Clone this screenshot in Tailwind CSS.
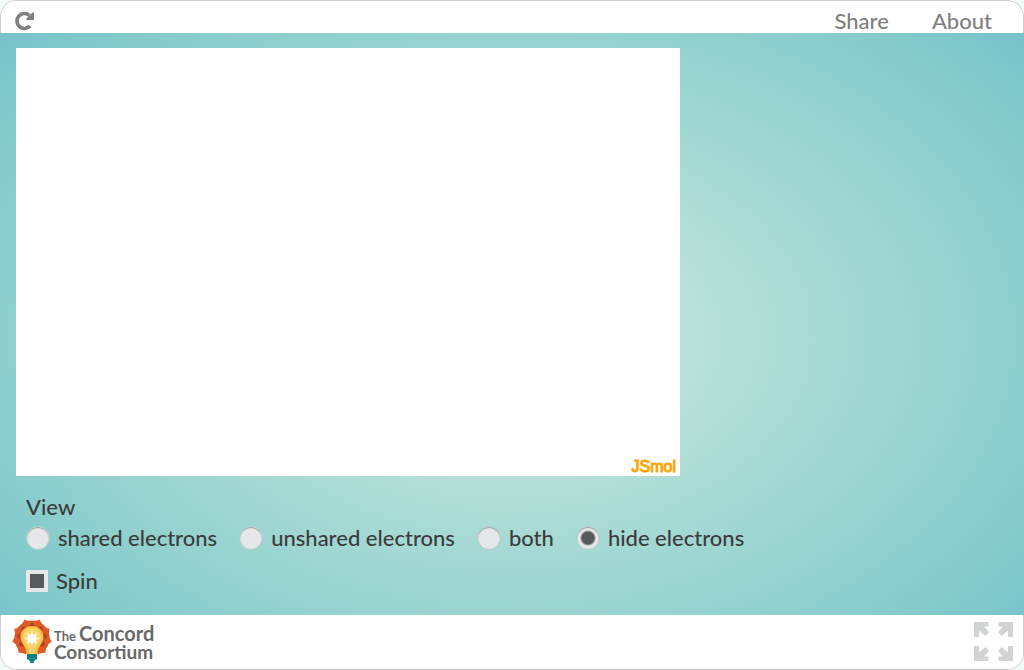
<!DOCTYPE html>
<html lang="en">
<head>
<meta charset="utf-8">
<meta name="viewport" content="width=device-width, initial-scale=1">
<title>Electron viewer</title>
<script src="https://cdn.jsdelivr.net/npm/@tailwindcss/browser@4"></script>
</head>
<body class="bg-[#f3faf9] font-['Lato',sans-serif] text-[22px] leading-7 font-medium text-[#3c3c3c]">
<div class="flex min-h-screen flex-col overflow-hidden rounded-2xl bg-white">
  <header class="flex h-[33px] items-end justify-between rounded-t-2xl border border-b-0 border-[#d0d0d0] pr-[31px] pl-3 text-[#7f7f7f]">
    <button type="button" aria-label="Reload" class="flex h-6 w-6 items-center justify-center">
      <svg viewBox="0 0 24 24" class="h-6 w-6" fill="none" aria-hidden="true">
        <path d="M17 17A7.500 7.500 0 1 1 16.500 6.500" stroke="#7f7f7f" stroke-width="3.600"/>
        <path d="M21 3.500V11h-7.500v-1.500l6-6z" fill="#7f7f7f"/>
      </svg>
    </button>
    <nav class="flex h-[26px] gap-[43px]">
      <a href="#share">Share</a>
      <a href="#about">About</a>
    </nav>
  </header>

  <main class="flex-1 bg-[radial-gradient(ellipse_70%_82%_at_50%_52%,#c3e7da_0%,#bae2d9_24%,#a6d9d4_45%,#8dcfce_72%,#75c2c9_97%)] px-4 pt-[15px] pb-5">
    <section aria-label="Molecule view" class="flex h-[428px] w-[66.94%] items-end justify-end bg-white px-1">
      <span class="font-['Liberation_Sans',sans-serif] text-base leading-[18px] font-normal text-[#ffa500] [-webkit-text-stroke:1px_#ffa500]">JSmol</span>
    </section>
    <form class="px-[10px] pt-[17px]">
      <fieldset>
        <legend>View</legend>
        <div class="flex flex-wrap items-center gap-x-[22px] pt-[3px]">
          <label class="flex items-center gap-2"><input type="radio" name="view" class="h-6 w-6 appearance-none rounded-full border border-[#a9cfcc] bg-[#e6e7e8] shadow-[inset_0_1px_1px_#999] checked:bg-[radial-gradient(circle,#58595b_6px,#e6e7e8_8px)]">shared electrons</label>
          <label class="flex items-center gap-2"><input type="radio" name="view" class="h-6 w-6 appearance-none rounded-full border border-[#a9cfcc] bg-[#e6e7e8] shadow-[inset_0_1px_1px_#999] checked:bg-[radial-gradient(circle,#58595b_6px,#e6e7e8_8px)]">unshared electrons</label>
          <label class="flex items-center gap-2"><input type="radio" name="view" class="h-6 w-6 appearance-none rounded-full border border-[#a9cfcc] bg-[#e6e7e8] shadow-[inset_0_1px_1px_#999] checked:bg-[radial-gradient(circle,#58595b_6px,#e6e7e8_8px)]">both</label>
          <label class="flex items-center gap-2"><input type="radio" name="view" checked class="h-6 w-6 appearance-none rounded-full border border-[#a9cfcc] bg-[#e6e7e8] shadow-[inset_0_1px_1px_#999] checked:bg-[radial-gradient(circle,#58595b_6px,#e6e7e8_8px)]">hide electrons</label>
        </div>
      </fieldset>
      <label class="mt-[15px] flex w-fit items-center gap-2"><input type="checkbox" checked class="h-[22px] w-[22px] appearance-none border-4 border-[#e6e7e8] bg-[#e6e7e8] checked:bg-[#58595b]">Spin</label>
    </form>
  </main>

  <footer class="flex h-[55px] items-start justify-between rounded-b-2xl border border-t-0 border-[#d0d0d0] px-[10px]">
    <a href="#home" aria-label="The Concord Consortium" class="flex items-start pt-[3px]">
      <svg viewBox="0 0 42 46" class="h-[46px] w-[42px]" aria-hidden="true">
        <defs>
          <path id="petal" d="M21 20L14 9Q13.500 5 15 3.500Q18.500 3 21 0Q23.500 3 27 3.500Q28.500 5 28 9z"/>
          <path id="fold" d="M21 20L16 11Q18 7 21 4.500Q24 7 26 11z"/>
        </defs>
        <g fill="#de5a28">
          <use href="#petal" transform="rotate(-22 21 20)"/><use href="#petal" transform="rotate(22 21 20)"/>
          <use href="#petal" transform="rotate(-63 21 20)"/><use href="#petal" transform="rotate(63 21 20)"/>
          <use href="#petal" transform="rotate(-100 21 20)"/><use href="#petal" transform="rotate(100 21 20)"/>
          <use href="#petal" transform="rotate(-138 21 20)"/><use href="#petal" transform="rotate(138 21 20)"/>
        </g>
        <g fill="#b5401f">
          <use href="#fold"/>
          <use href="#fold" transform="rotate(-43 21 20)"/><use href="#fold" transform="rotate(43 21 20)"/>
          <use href="#fold" transform="rotate(-82 21 20)"/><use href="#fold" transform="rotate(82 21 20)"/>
          <use href="#fold" transform="rotate(-119 21 20)"/><use href="#fold" transform="rotate(119 21 20)"/>
        </g>
        <path d="M21 8C13 8 9 14 9.500 20c.5 6 6 8 6 16h11c0-8 5.500-10 6-16C33 14 29 8 21 8z" fill="#f6bd48"/>
        <path d="M21 10c-6 0-9 5-9 10 1 6 6 8 7 16h4c1-8 6-10 7-16 0-5-3-10-9-10z" fill="#fbd46c"/>
        <path d="M21 13l1.500 4 3.500-2-1 4 4 1.500-4 1.500 1 4-3.500-2L21 28l-1.500-4-3.500 2 1-4-4-1.500 4-1.500-1-4 3.500 2z" fill="#fffdf0"/>
        <path d="M16 36h10v5l-3 2v2h-4v-2l-3-2z" fill="#14868f"/>
        <path d="M16 38h10" stroke="#0d6972"/>
      </svg>
      <span class="flex flex-col pt-2 pl-px font-['Lato',sans-serif] text-[19px] leading-[15px] font-bold text-[#696969]"><span class="flex items-baseline gap-[3px]"><span class="text-[13px] leading-[15px]">The</span><span class="text-xl leading-[15px]">Concord</span></span><span>Consortium</span></span>
    </a>
    <button type="button" aria-label="Full screen" class="pt-[6px]">
      <svg viewBox="0 0 40 42" class="h-[42px] w-10" fill="#d1d3d4" aria-hidden="true">
        <path id="arrow" d="M1 1h14.500v4.500H11l5 5.500-3.500 4L6 9.500V16H1z"/>
        <use href="#arrow" transform="translate(41 0) scale(-1 1)"/>
        <use href="#arrow" transform="translate(0 41) scale(1 -1)"/>
        <use href="#arrow" transform="translate(41 41) scale(-1 -1)"/>
      </svg>
    </button>
  </footer>
</div>
</body>
</html>
